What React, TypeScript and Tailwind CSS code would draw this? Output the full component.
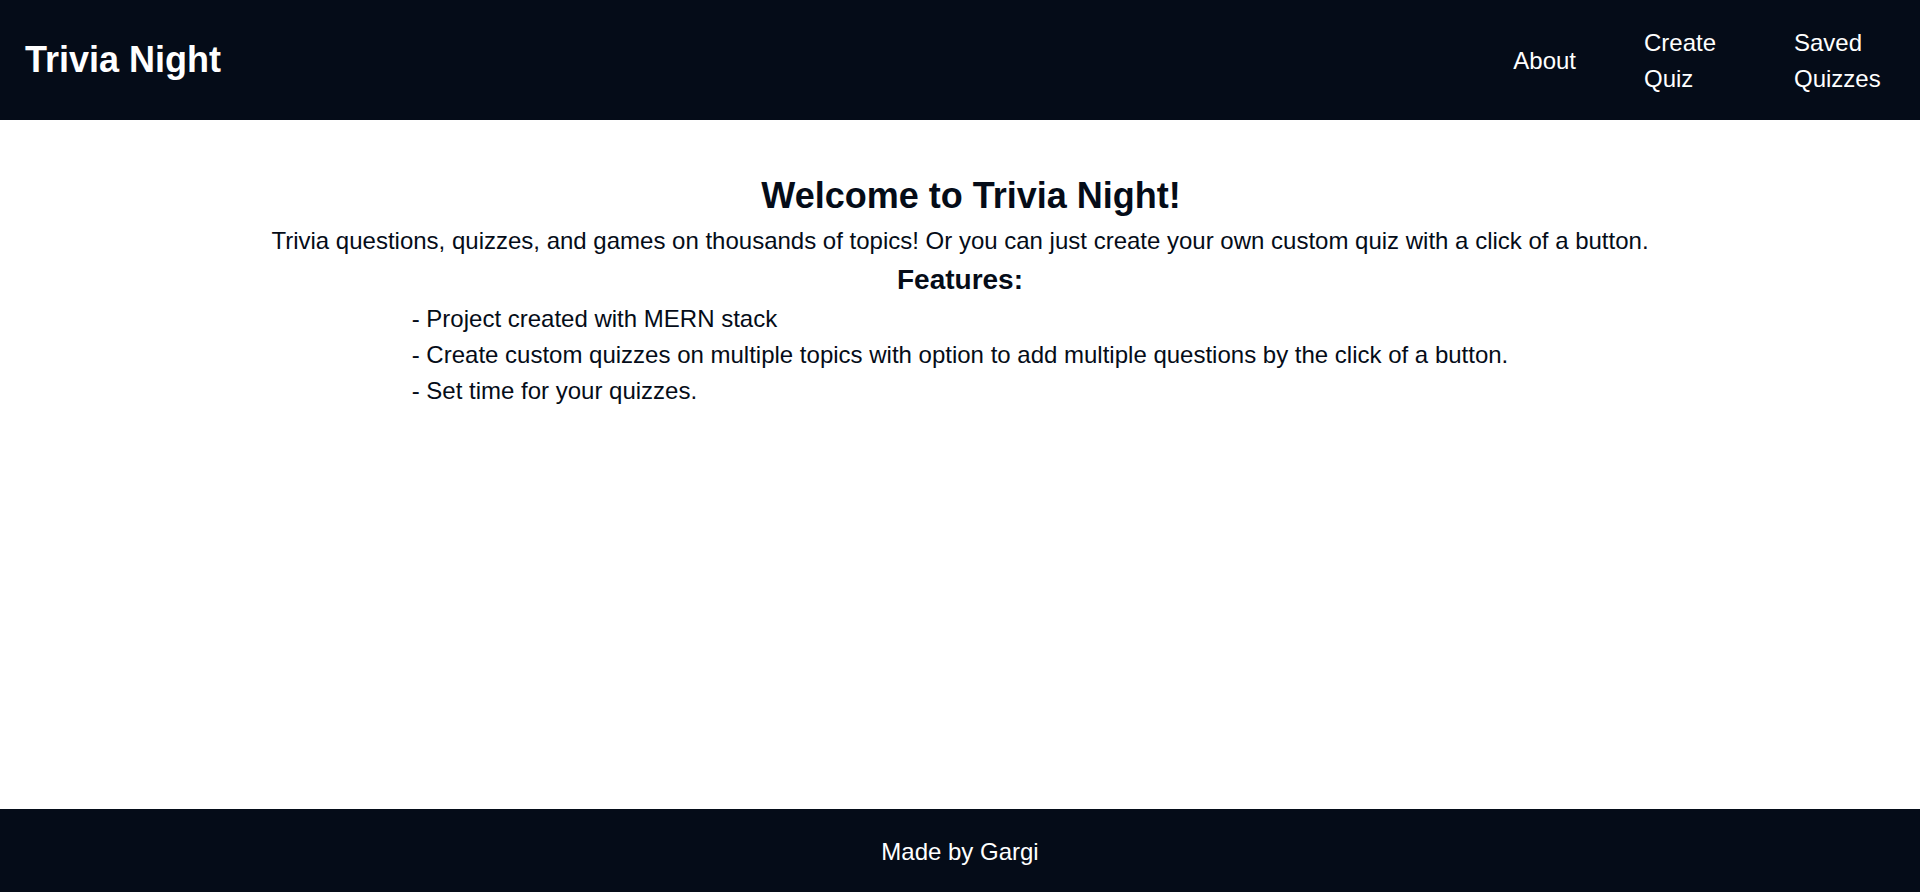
import React from "react";

export default function App() {
  return (
    <div
      className="min-h-screen flex flex-col bg-white"
      style={{ fontFamily: '"Liberation Sans", Arial, sans-serif' }}
    >
      <header className="h-[120px] bg-[#050c18] flex items-center justify-between pl-[25px] pr-[39px]">
        <div className="text-white text-[36px] font-bold leading-none">Trivia Night</div>
        <nav className="flex items-center text-white text-[24px] leading-[36px] mt-[2px]">
          <a className="block">About</a>
          <a className="block w-[90px] ml-[68px] mr-[60px]">Create Quiz</a>
          <a className="block w-[87px]">Saved Quizzes</a>
        </nav>
      </header>
      <main className="flex-1 pt-[49px] text-center text-[#050c18]">
        <h1 className="text-[36px] font-bold leading-[54px] pl-[22px]">Welcome to Trivia Night!</h1>
        <p className="text-[24px] leading-[36px] text-[#050c18]">
          Trivia questions, quizzes, and games on thousands of topics! Or you can just create your own custom quiz with a click of a button.
        </p>
        <h3 className="text-[28px] font-bold leading-[42px]">Features:</h3>
        <div className="w-fit mx-auto text-left text-[24px] leading-[36px]">
          <p>- Project created with MERN stack</p>
          <p>- Create custom quizzes on multiple topics with option to add multiple questions by the click of a button.</p>
          <p>- Set time for your quizzes.</p>
        </div>
      </main>
      <footer className="h-[83px] bg-[#050c18] flex items-center justify-center pt-[2px] text-white text-[24px]">
        Made by Gargi
      </footer>
    </div>
  );
}
